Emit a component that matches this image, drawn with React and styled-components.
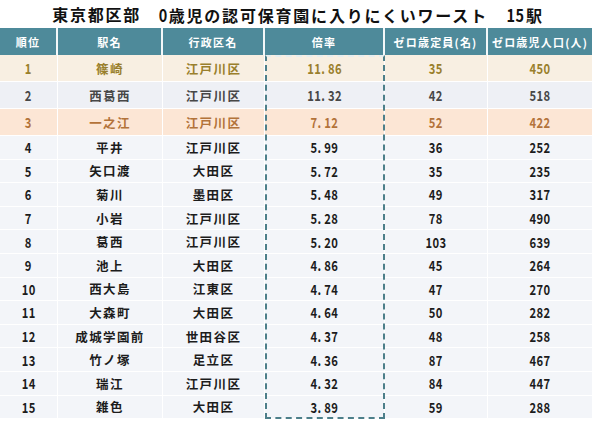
import React from "react";
import styled, { createGlobalStyle } from "styled-components";

const GlobalStyle = createGlobalStyle`
  html, body {
    margin: 0;
    padding: 0;
    background: #ffffff;
  }
  body {
    font-family: "Noto Sans CJK JP", "Noto Sans", sans-serif;
  }
`;

const rows = [
  [1, "篠崎", "江戸川区", "11.86", 35, 450],
  [2, "西葛西", "江戸川区", "11.32", 42, 518],
  [3, "一之江", "江戸川区", "7.12", 52, 422],
  [4, "平井", "江戸川区", "5.99", 36, 252],
  [5, "矢口渡", "大田区", "5.72", 35, 235],
  [6, "菊川", "墨田区", "5.48", 49, 317],
  [7, "小岩", "江戸川区", "5.28", 78, 490],
  [8, "葛西", "江戸川区", "5.20", 103, 639],
  [9, "池上", "大田区", "4.86", 45, 264],
  [10, "西大島", "江東区", "4.74", 47, 270],
  [11, "大森町", "大田区", "4.64", 50, 282],
  [12, "成城学園前", "世田谷区", "4.37", 48, 258],
  [13, "竹ノ塚", "足立区", "4.36", 87, 467],
  [14, "瑞江", "江戸川区", "4.32", 84, 447],
  [15, "雑色", "大田区", "3.89", 59, 288],
];

const headers = ["順位", "駅名", "行政区名", "倍率", "ゼロ歳定員(名)", "ゼロ歳児人口(人)"];

const tones = {
  1: { bg: "#f8efe2", color: "#9a7f2c" },
  2: { bg: "#eef0f5", color: "#474747" },
  3: { bg: "#fce6d5", color: "#b3733a" },
};
const plain = { bg: "#f3f5f9", color: "#1c1c1c" };

const Page = styled.div`
  width: 600px;
  height: 421px;
  overflow: hidden;
`;

const Title = styled.h1`
  margin: 0;
  height: 28px;
  display: flex;
  align-items: center;
  justify-content: center;
  gap: 17px;
  padding-right: 4px;
  font-size: 16px;
  font-weight: 700;
  letter-spacing: 1.8px;
  color: #111;
`;

const Table = styled.div`
  display: grid;
  width: 592px;
  grid-template-columns: 58px 105px 102px 120px 103px 104px;
  grid-template-rows: 27px repeat(3, 27px) repeat(12, 23.6px);
`;

const HeadCell = styled.div`
  grid-column: ${(p) => p.$col};
  grid-row: 1;
  background: #4e8a9a;
  color: #ffffff;
  font-size: 11px;
  font-weight: 700;
  letter-spacing: 1.2px;
  display: flex;
  align-items: center;
  justify-content: center;
  border-right: ${(p) => (p.$col < 6 ? "2px solid #f4f8f9" : "none")};
  white-space: nowrap;
`;

const Cell = styled.div`
  grid-column: ${(p) => p.$col};
  grid-row: ${(p) => p.$row};
  background: ${(p) => p.$bg};
  color: ${(p) => p.$color};
  font-size: 12.5px;
  font-weight: 700;
  letter-spacing: 1.4px;
  display: flex;
  align-items: center;
  justify-content: center;
  border-right: ${(p) => (p.$col < 6 ? "1px solid #ffffff" : "none")};
  border-bottom: 1px solid #ffffff;
`;

const Num = styled.span`
  display: inline-block;
  font-size: 14px;
  letter-spacing: 0.4px;
  transform: scaleX(0.8);
`;

const Highlight = styled.div`
  grid-column: 4;
  grid-row: 2 / 17;
  border: 2px dashed #4d7f8a;
  border-top-color: #e6eef0;
  pointer-events: none;
  z-index: 1;
`;

const TitleNum = styled.span`
  display: inline-block;
  font-size: 17px;
  letter-spacing: 0.5px;
  transform: scaleX(0.85);
`;

export default function App() {
  return (
    <Page>
      <GlobalStyle />
      <Title>
        <span>東京都区部</span>
        <span>
          <TitleNum>0</TitleNum>歳児の認可保育園に入りにくいワースト
        </span>
        <span>
          <TitleNum>15</TitleNum>駅
        </span>
      </Title>
      <Table>
        {headers.map((h, i) => (
          <HeadCell key={h} $col={i + 1}>
            {h}
          </HeadCell>
        ))}
        {rows.map((r, ri) => {
          const tone = tones[r[0]] || plain;
          return r.map((v, ci) => (
            <Cell
              key={`${ri}-${ci}`}
              $row={ri + 2}
              $col={ci + 1}
              $bg={tone.bg}
              $color={tone.color}
            >
              {typeof v === "number" || ci === 3 ? (
                <Num>{ci === 3 ? String(v).replace(".", ". ") : v}</Num>
              ) : (
                v
              )}
            </Cell>
          ));
        })}
        <Highlight />
      </Table>
    </Page>
  );
}
